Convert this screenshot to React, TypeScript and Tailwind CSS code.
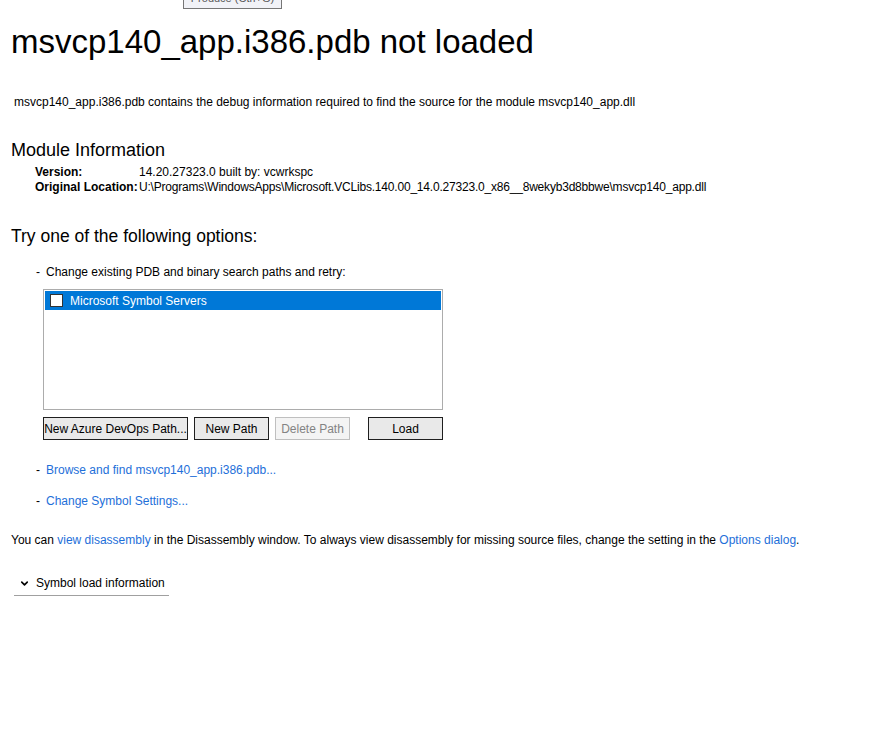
import { ChevronDown } from 'lucide-react';

const font = { fontFamily: '"Segoe UI", "Liberation Sans", Arial, sans-serif' };

function Btn({ children, disabled, className = '' }: { children: React.ReactNode; disabled?: boolean; className?: string }) {
    return (
        <button
            className={
                'h-[23px] border text-[12px] leading-none ' +
                (disabled ? 'border-[#bfbfbf] bg-[#f4f4f4] text-[#838383] ' : 'border-[#1f1f1f] bg-[#e9e9e9] text-black ') +
                className
            }
        >
            {children}
        </button>
    );
}

export default function App() {
    return (
        <div className="relative min-h-[738px] w-[872px] bg-white text-[12px] text-black" style={font}>
            {/* tooltip peeking from the toolbar */}
            <div className="absolute left-[183px] top-[-10px] h-[19px] w-[99px] border border-[#767676] bg-[#f1f2f7] text-center text-[11px] leading-[15px] text-[#575757]">
                Produce (Ctrl+G)
            </div>

            <div className="pl-[11px] pt-[22px]">
                <h1 className="text-[33px] leading-[40px] font-normal">msvcp140_app.i386.pdb not loaded</h1>

                <p className="mt-[32px] pl-[3px] leading-[16px]">
                    msvcp140_app.i386.pdb contains the debug information required to find the source for the module msvcp140_app.dll
                </p>

                <h2 className="mt-[29px] text-[18px] leading-[22px]">Module Information</h2>
                <div className="mt-[4px] pl-[24px] leading-[15px]">
                    <div className="flex">
                        <span className="w-[104px] font-bold">Version:</span>
                        <span>14.20.27323.0 built by: vcwrkspc</span>
                    </div>
                    <div className="flex">
                        <span className="w-[104px] font-bold">Original Location:</span>
                        <span className="tracking-[-0.2px]">U:\Programs\WindowsApps\Microsoft.VCLibs.140.00_14.0.27323.0_x86__8wekyb3d8bbwe\msvcp140_app.dll</span>
                    </div>
                </div>

                <h2 className="mt-[30px] text-[17.5px] leading-[22px]">Try one of the following options:</h2>

                <div className="mt-[17px] pl-[24px]">
                    <div className="flex leading-[16px]">
                        <span className="w-[11px] pl-[1px]">-</span>
                        <span>Change existing PDB and binary search paths and retry:</span>
                    </div>

                    <div className="ml-[8px] mt-[9px] h-[121px] w-[400px] border border-[#acacac] p-[1px]">
                        <div className="flex h-[19px] items-center bg-[#0078d7] pl-[5px] text-white">
                            <span className="h-[13px] w-[13px] border border-[#333] bg-white" />
                            <span className="ml-[7px]">Microsoft Symbol Servers</span>
                        </div>
                    </div>

                    <div className="ml-[8px] mt-[7px] flex">
                        <Btn className="w-[145px]">New Azure DevOps Path...</Btn>
                        <Btn className="ml-[6px] w-[75px]">New Path</Btn>
                        <Btn disabled className="ml-[6px] w-[75px]">Delete Path</Btn>
                        <Btn className="ml-[18px] w-[75px]">Load</Btn>
                    </div>

                    <div className="mt-[22px] flex leading-[16px]">
                        <span className="w-[11px] pl-[1px]">-</span>
                        <a className="text-[#1e6fd9]">Browse and find msvcp140_app.i386.pdb...</a>
                    </div>
                    <div className="mt-[15px] flex leading-[16px]">
                        <span className="w-[11px] pl-[1px]">-</span>
                        <a className="text-[#1e6fd9]">Change Symbol Settings...</a>
                    </div>
                </div>

                <p className="mt-[23px] leading-[16px]">
                    You can <a className="text-[#1e6fd9]">view disassembly</a> in the Disassembly window. To always view
                    disassembly for missing source files, change the setting in the{' '}
                    <a className="text-[#1e6fd9]">Options dialog</a>.
                </p>

                <div className="ml-[3px] mt-[27px] flex w-[155px] items-center border-b border-[#a0a0a0] pb-[4px] pl-[5px]">
                    <ChevronDown className="h-[11px] w-[11px]" strokeWidth={3.5} />
                    <span className="ml-[6px] leading-[16px]">Symbol load information</span>
                </div>
            </div>
        </div>
    );
}
